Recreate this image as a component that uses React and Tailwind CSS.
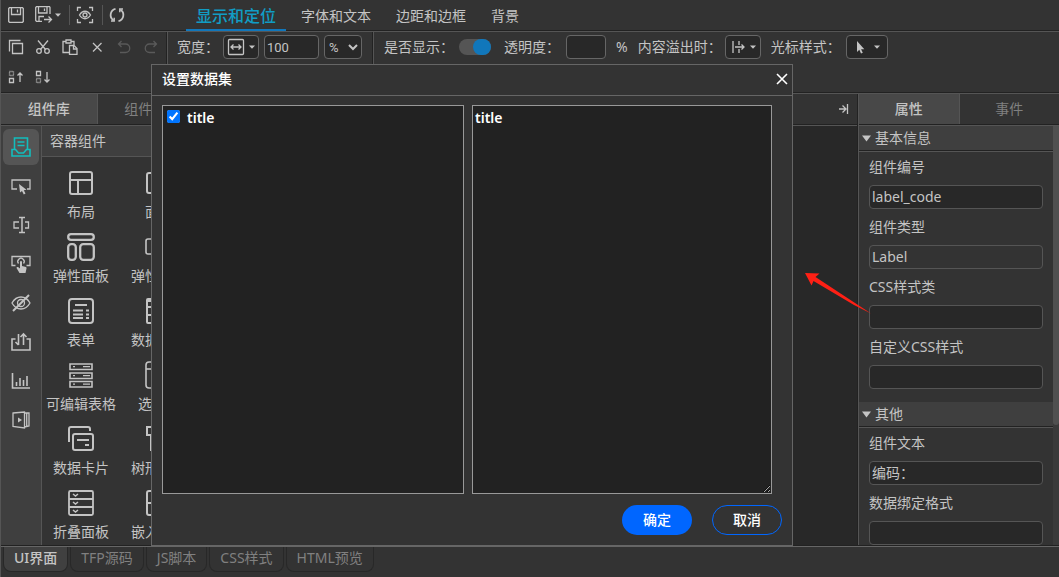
import { useState } from 'react';
import clsx from 'clsx';

const Icon = ({ size = 18, children, ...props }) => (
  <svg
    width={size}
    height={size}
    viewBox={`0 0 ${size} ${size}`}
    fill="none"
    stroke="currentColor"
    strokeWidth="1.3"
    aria-hidden="true"
    className="shrink-0"
    {...props}
  >
    {children}
  </svg>
);

const Caret = () => (
  <svg width="6" height="4" viewBox="0 0 6 4" fill="currentColor" aria-hidden="true">
    <path d="M0 0.5h6L3 3.7z" />
  </svg>
);

const SaveIcon = () => (
  <Icon size={16}>
    <path d="M1.5 .7h13l.8.8v13l-.8.8h-13l-.8-.8v-13z" />
    <path d="M3.5 1v6.5h9V1M9.5 2.5v3" />
  </Icon>
);

const SaveAsIcon = () => (
  <Icon size={18}>
    <path d="M7 15.3H1.5l-.8-.8v-13l.8-.8h13l.5.8V8" />
    <path d="M3.5 1v6H12V1M9.5 2.5V5M4 15v-4.500h5M9 13.500h7.500M13.500 10.500l3 3-3 3" />
  </Icon>
);

const PreviewIcon = () => (
  <Icon size={18}>
    <path d="M1.500 5V1.500H5M13 1.500h3.500V5M16.500 13v3.500H13M5 16.500H1.500V13" />
    <path d="M3.500 9c3-5 8-5 11 0-3 5-8 5-11 0z" />
    <circle cx="9" cy="9" r="2" />
  </Icon>
);

const RefreshIcon = () => (
  <Icon size={18} strokeWidth="1.8">
    <path d="M7.500 2.800A6.300 6.300 0 0 0 5.500 14.200M10.500 15.200A6.300 6.300 0 0 0 12.500 3.800" />
    <path d="M3 15h3.200v-3.300M15 3h-3.200v3.300" strokeWidth="1.500" />
  </Icon>
);

const CopyIcon = () => (
  <Icon size={16}>
    <path d="M4.500 4.500h10v10h-10z" />
    <path d="M1.500 12.500v-11h11" />
  </Icon>
);

const CutIcon = () => (
  <Icon size={16}>
    <circle cx="4" cy="12" r="2.300" />
    <circle cx="12" cy="12" r="2.300" />
    <path d="M3 1.500l7.500 9M13 1.500l-7.500 9" />
  </Icon>
);

const PasteIcon = () => (
  <Icon size={16}>
    <path d="M7 13.500H1V2.500h3M9 2.500h3V6M4 1h5v3H4zM7.500 6.500h4.500l3 3v6H7.500z" />
    <path d="M11.500 6.500v3.500H15" />
  </Icon>
);

const DeleteIcon = () => (
  <Icon size={16}>
    <path d="M4 4l8.500 8.500M12.500 4L4 12.500" />
  </Icon>
);

const UndoIcon = () => (
  <Icon size={16}>
    <path d="M5.500 2L2.500 5l3 3M2.500 5h7a4 4 0 0 1 0 8.500H4" />
  </Icon>
);

const RedoIcon = () => (
  <Icon size={16}>
    <path d="M10.500 2l3 3-3 3M13.500 5h-7a4 4 0 0 0 0 8.500H12" />
  </Icon>
);

const MoveUpIcon = () => (
  <Icon size={16}>
    <path d="M1.500 2.500h4v4h-4z" strokeDasharray="1 1" />
    <path d="M1.500 9.500h4v4h-4zM12 13V4M9.500 6.500L12 4l2.500 2.500" />
  </Icon>
);

const MoveDownIcon = () => (
  <Icon size={16}>
    <path d="M1.500 2.500h4v4h-4z" />
    <path d="M1.500 9.500h4v4h-4z" strokeDasharray="1 1" />
    <path d="M12 3v10M9.500 10.500L12 13l2.500-2.500" />
  </Icon>
);

const HEADER_TABS = ['显示和定位', '字体和文本', '边距和边框', '背景'];

const EDIT_TOOLS = [
  { name: '复制', icon: <CopyIcon /> },
  { name: '剪切', icon: <CutIcon /> },
  { name: '粘贴', icon: <PasteIcon /> },
  { name: '删除', icon: <DeleteIcon /> },
  { name: '撤销', icon: <UndoIcon />, disabled: true },
  { name: '重做', icon: <RedoIcon />, disabled: true },
  { name: '上移', icon: <MoveUpIcon /> },
  { name: '下移', icon: <MoveDownIcon /> }
];

const CATEGORIES = [
  {
    name: '容器组件',
    icon: (
      <Icon size={20} strokeWidth="1.600">
        <path d="M3.500 12V1h13v11M1 19v-6.500h3.500L7.500 16h5l3-3.500H19V19zM6.500 5h7M6.500 8.500h7" />
      </Icon>
    )
  },
  {
    name: '按钮组件',
    icon: (
      <Icon size={20}>
        <path d="M6 13H1V4h18v9h-3" />
        <path d="M8 8l1 8.500 2-1.500 1.800 3.500 1.700-1-1.700-3.200 2.700-.5z" fill="currentColor" stroke="none" />
      </Icon>
    )
  },
  {
    name: '输入组件',
    icon: (
      <Icon size={20}>
        <path d="M8 7H3v6h5M14 7h3.500v6H14" />
        <path d="M8 2.500h6M11 2.500v15M8 17.500h6" strokeWidth="1.500" />
      </Icon>
    )
  },
  {
    name: '交互组件',
    icon: (
      <Icon size={20}>
        <path d="M4.500 11.500H1V2.500h18v9h-3.500M7.500 9.500a3.200 3.200 0 1 1 5 0" />
        <path d="M9 7.500q1-1 2 0V12l4 1q.8.500.5 1.500L14.500 19H8.500L5.500 14q0-1.500 1.500-1l2 1.500z" fill="currentColor" stroke="none" />
      </Icon>
    )
  },
  {
    name: '隐藏组件',
    icon: (
      <Icon size={20}>
        <path d="M1 10c4.500-8 13.500-8 18 0-4.500 8-13.500 8-18 0z" />
        <circle cx="10" cy="10" r="3.500" />
        <path d="M2 18L18 2" strokeWidth="2" />
      </Icon>
    )
  },
  {
    name: '数据组件',
    icon: (
      <Icon size={20} strokeWidth="1.600">
        <path d="M4.500 7H1v11h18V7h-3.500M7.500 2v11M4.500 10l3 3M12.500 13V2M9.500 5l3-3 3 3" />
      </Icon>
    )
  },
  {
    name: '图表组件',
    icon: (
      <Icon size={20} strokeWidth="1.600">
        <path d="M1.500 2v15H19M5.500 11v4M9 7v8M12.500 9v6M16 5v10" />
      </Icon>
    )
  },
  {
    name: '媒体组件',
    icon: (
      <Icon size={20}>
        <path d="M2 3l11.500-1v16L2 16.500zM13.500 3H18v13l-4.500 1M15.700 3v13.500" />
        <path d="M7 7.500v5l4-2.500z" fill="currentColor" stroke="none" />
      </Icon>
    )
  }
];

const COMPONENTS = [
  {
    name: '布局',
    icon: (
      <Icon size={28} strokeWidth="2">
        <rect x="3" y="3" width="22" height="22" rx="2" />
        <path d="M3 11h22M11 11v14" />
      </Icon>
    )
  },
  {
    name: '面板',
    icon: (
      <Icon size={28} strokeWidth="2">
        <rect x="2" y="4" width="24" height="20" rx="2" />
      </Icon>
    )
  },
  {
    name: '弹性面板',
    icon: (
      <Icon size={28} strokeWidth="2.300">
        <rect x="1.200" y="1.200" width="25.600" height="5.600" rx="2.800" />
        <rect x="1.200" y="11.200" width="7.600" height="15.600" rx="3" />
        <rect x="13.200" y="11.200" width="13.600" height="15.600" rx="3" />
      </Icon>
    )
  },
  {
    name: '弹性布局',
    icon: (
      <Icon size={28} strokeWidth="1.600">
        <rect x="1" y="6" width="26" height="15" rx="2" />
      </Icon>
    )
  },
  {
    name: '表单',
    icon: (
      <Icon size={28} strokeWidth="2">
        <rect x="2" y="2" width="24" height="24" rx="3" />
        <path d="M8 8h12M6 13.500h10M6 17.500h10M6 21h10M19 13.500h3M19 17.500h3M19 21h3" />
      </Icon>
    )
  },
  {
    name: '数据表格',
    icon: (
      <Icon size={28} strokeWidth="2">
        <rect x="2" y="2" width="24" height="24" rx="1" />
        <path d="M2 4h24M2 10h24M2 18h24" />
      </Icon>
    )
  },
  {
    name: '可编辑表格',
    icon: (
      <Icon size={28} strokeWidth="1.600">
        <path d="M3 3h22v5.500H3zM3 12h22v5.500H3zM3 20.500h22V26H3z" />
        <path d="M6 5.700h2M16 5.700h7M6 14.700h2M16 14.700h7M6 23.200h2M16 23.200h7" strokeWidth="1.300" />
      </Icon>
    )
  },
  {
    name: '选项卡',
    icon: (
      <Icon size={28} strokeWidth="1.600">
        <rect x="1" y="1" width="26" height="26" rx="3" />
        <path d="M1 8h26" />
      </Icon>
    )
  },
  {
    name: '数据卡片',
    icon: (
      <Icon size={28} strokeWidth="2">
        <path d="M2 17V4q0-2 2-2h17q2 0 2 2v2" />
        <rect x="6" y="9" width="20" height="16" rx="2" />
        <path d="M10 15h12M18 20h4" />
      </Icon>
    )
  },
  {
    name: '树形组件',
    icon: (
      <Icon size={28} strokeWidth="2">
        <path d="M2 2h8v8H2zM6 10v15h12M6 14h12M18 10h8v8h-8z" />
      </Icon>
    )
  },
  {
    name: '折叠面板',
    icon: (
      <Icon size={28} strokeWidth="1.800">
        <rect x="2" y="2" width="24" height="24" rx="1.500" />
        <path d="M2 10h24M2 18h24" />
        <path d="M6 5l2.500 2L11 5M6 13l2.500 2 2.500-2M6 21l2.500 2 2.500-2" strokeWidth="1.500" />
      </Icon>
    )
  },
  {
    name: '嵌入页面',
    icon: (
      <Icon size={28} strokeWidth="2">
        <rect x="2" y="2" width="24" height="24" rx="2" />
        <path d="M2 14h24" />
      </Icon>
    )
  }
];

const SECTIONS = [
  {
    title: '基本信息',
    fields: [
      { id: 'code', label: '组件编号', value: 'label_code' },
      { id: 'type', label: '组件类型', value: 'Label', readOnly: true },
      { id: 'cssClass', label: 'CSS样式类', value: '' },
      { id: 'cssStyle', label: '自定义CSS样式', value: '' }
    ]
  },
  {
    title: '其他',
    fields: [
      { id: 'text', label: '组件文本', value: '编码：' },
      { id: 'format', label: '数据绑定格式', value: '' }
    ]
  }
];

const EDITOR_TABS = ['UI界面', 'TFP源码', 'JS脚本', 'CSS样式', 'HTML预览'];

const Header = () => {
  const [active, setActive] = useState(0);

  return (
    <header className="flex h-[31px] shrink-0 items-center border-b border-[#222]">
      <div className="flex w-[185px] items-center pl-[7px]">
        <button type="button" aria-label="保存"><SaveIcon /></button>
        <button type="button" aria-label="另存为" className="ml-[11px] flex items-center gap-[2px]">
          <SaveAsIcon />
          <Caret />
        </button>
        <span className="ml-2 h-5 w-px bg-[#555]" />
        <button type="button" aria-label="预览" className="ml-[6px]"><PreviewIcon /></button>
        <span className="ml-2 h-5 w-px bg-[#555]" />
        <button type="button" aria-label="刷新" className="ml-[5px]"><RefreshIcon /></button>
      </div>
      <nav className="flex h-full gap-[5px]">
        {HEADER_TABS.map((tab, i) => (
          <button
            key={tab}
            type="button"
            onClick={() => setActive(i)}
            className={clsx(
              'h-[31px] px-[10px]',
              i === active
                ? 'border-b-2 border-[#1177bb] pt-[2px] text-base font-medium text-[#119dc4]'
                : 'text-sm'
            )}
          >
            {tab}
          </button>
        ))}
      </nav>
    </header>
  );
};

const Toolbar = () => {
  const [width, setWidth] = useState('100');
  const [opacity, setOpacity] = useState('');
  const [visible, setVisible] = useState(true);

  return (
    <div className="flex h-[62px] shrink-0 border-t border-b border-t-[#555] border-b-[#222]">
      <div className="flex w-[166px] flex-wrap content-start border-r border-[#222] pl-px">
        {EDIT_TOOLS.map(({ name, icon, disabled }) => (
          <button
            key={name}
            type="button"
            aria-label={name}
            disabled={disabled}
            className="flex h-[30px] w-[27px] items-center justify-center disabled:text-[#5a5a5a]"
          >
            {icon}
          </button>
        ))}
      </div>
      <div className="flex w-[206px] items-start gap-[5px] border-r border-l border-r-[#222] border-l-[#555] pt-[3px] pl-[9px]">
        <label htmlFor="width" className="w-[41px] shrink-0 leading-6 whitespace-nowrap">宽度：</label>
        <button
          type="button"
          aria-label="宽度模式"
          className="flex h-6 w-9 shrink-0 items-center justify-center gap-1 rounded border border-[#666] bg-[#282828]"
        >
          <Icon size={18}>
            <rect x="1.500" y="1.500" width="15" height="15" rx="1" />
            <path d="M4.500 9h9M6.500 6.500L4 9l2.500 2.500M11.500 6.500L14 9l-2.500 2.500" />
          </Icon>
          <Caret />
        </button>
        <input
          id="width"
          value={width}
          onChange={(e) => setWidth(e.target.value)}
          className="h-6 w-[55px] shrink-0 rounded border border-[#666] bg-[#282828] px-[2px] font-[Roboto,'Noto_Sans_CJK_SC',sans-serif] text-[13px]"
        />
        <select
          aria-label="宽度单位"
          className="h-6 w-[38px] shrink-0 rounded border border-[#666] bg-[#282828] font-[Roboto,'Noto_Sans_CJK_SC',sans-serif] text-[13px]"
        >
          <option>%</option>
          <option>px</option>
        </select>
      </div>
      <div className="flex min-w-0 grow items-start border-l border-[#555] pt-[3px] pl-[10px] leading-6 whitespace-nowrap">
        <label htmlFor="visible">是否显示：</label>
        <input
          id="visible"
          type="checkbox"
          checked={visible}
          onChange={(e) => setVisible(e.target.checked)}
          className="mt-1 ml-[5px] flex h-4 w-8 shrink-0 appearance-none rounded-full bg-[#555] before:h-4 before:w-[18px] before:rounded-full before:bg-[#999] checked:justify-end checked:before:bg-[#1177bb]"
        />
        <label htmlFor="opacity" className="ml-[13px]">透明度：</label>
        <input
          id="opacity"
          value={opacity}
          onChange={(e) => setOpacity(e.target.value)}
          className="ml-[6px] h-6 w-10 rounded border border-[#666] bg-[#282828] px-[2px]"
        />
        <span className="ml-[10px]">%</span>
        <span className="ml-[10px]">内容溢出时：</span>
        <button
          type="button"
          aria-label="内容溢出时"
          className="ml-[3px] flex h-6 w-9 items-center justify-center gap-1 rounded border border-[#666] bg-[#282828]"
        >
          <Icon size={16}>
            <path d="M3 2v12M5 8h9M11.500 5.500L14 8l-2.500 2.500M9 2v4M9 10v4" />
          </Icon>
          <Caret />
        </button>
        <span className="ml-[10px]">光标样式：</span>
        <button
          type="button"
          aria-label="光标样式"
          className="ml-[5px] flex h-6 w-[42px] items-center justify-center gap-2 rounded border border-[#666] bg-[#282828]"
        >
          <svg width="12" height="14" viewBox="0 0 12 14" fill="currentColor" aria-hidden="true">
            <path d="M3 1v11l2.300-2.200 1.700 3.700 1.800-.8-1.700-3.500h3.200z" />
          </svg>
          <Caret />
        </button>
      </div>
    </div>
  );
};

const PanelTabs = ({ tabs }) => {
  const [active, setActive] = useState(0);

  return (
    <div className="flex h-[31px] shrink-0 border-b border-[#222]">
      {tabs.map((tab, i) => (
        <button
          key={tab}
          type="button"
          onClick={() => setActive(i)}
          className={clsx(
            'flex-1',
            i > 0 && 'border-l border-[#555]',
            i === active ? 'bg-[#484848] font-medium' : 'text-[#808080]'
          )}
        >
          {tab}
        </button>
      ))}
    </div>
  );
};

const LibraryPanel = () => {
  const [category, setCategory] = useState('容器组件');

  return (
    <aside className="flex w-[193px] shrink-0 flex-col border-r border-[#555]">
      <PanelTabs tabs={['组件库', '组件树']} />
      <div className="flex min-h-0 grow border-t border-[#555]">
        <div className="flex w-[41px] shrink-0 flex-col gap-[3px] border-r border-[#555] bg-[#3f3f3f] pt-[3px] pl-[2px]">
          {CATEGORIES.map(({ name, icon }) => (
            <button
              key={name}
              type="button"
              aria-label={name}
              onClick={() => setCategory(name)}
              className={clsx(
                'flex h-9 w-9 shrink-0 items-center justify-center rounded-md',
                name === category && 'bg-[#555] text-[#12bdbd]'
              )}
            >
              {icon}
            </button>
          ))}
        </div>
        <div className="min-w-0 grow overflow-hidden">
          <h2 className="h-[31px] border-b border-[#555] bg-[#3f3f3f] pl-2 leading-[30px]">{category}</h2>
          <div className="grid grid-cols-[78px_78px] pt-[9px]">
            {COMPONENTS.map(({ name, icon }) => (
              <button key={name} type="button" className="flex h-16 flex-col items-center gap-[5px] pt-[3px] whitespace-nowrap">
                {icon}
                <span className="leading-5">{name}</span>
              </button>
            ))}
          </div>
        </div>
      </div>
    </aside>
  );
};

const PropertyPanel = () => {
  const [values, setValues] = useState(
    Object.fromEntries(SECTIONS.flatMap((s) => s.fields.map((f) => [f.id, f.value])))
  );

  const handleChange = (e) => {
    setValues({ ...values, [e.target.name]: e.target.value });
  };

  return (
    <aside className="flex w-[201px] shrink-0 flex-col border-l border-[#555]">
      <PanelTabs tabs={['属性', '事件']} />
      <div className="flex min-h-0 grow border-t border-[#555]">
        <div className="min-w-0 grow overflow-hidden">
          {SECTIONS.map(({ title, fields }) => (
            <section key={title}>
              <div className="border-b border-[#555]">
                <h2 className="flex h-[25px] items-center gap-1 border-b border-[#222] bg-[#3f3f3f] pl-[3px]">
                  <svg width="9" height="7" viewBox="0 0 9 7" fill="currentColor" aria-hidden="true">
                    <path d="M0 0.500h9L4.500 6.500z" />
                  </svg>
                  {title}
                </h2>
              </div>
              <div className="px-[10px] py-[5px]">
                {fields.map(({ id, label, readOnly }) => (
                  <div key={id} className="mb-2">
                    <label htmlFor={id} className="mb-2 block leading-5">{label}</label>
                    <input
                      id={id}
                      name={id}
                      value={values[id]}
                      readOnly={readOnly}
                      onChange={handleChange}
                      className="block h-6 w-full rounded border border-[#555] bg-[#282828] px-[2px] pb-[2px] read-only:bg-transparent"
                    />
                  </div>
                ))}
              </div>
            </section>
          ))}
        </div>
        <div className="w-[6px] shrink-0 bg-[#3a3a3a]">
          <div className="h-[299px] rounded-b-sm bg-[#505050]" />
        </div>
      </div>
    </aside>
  );
};

const DatasetDialog = () => {
  const [checked, setChecked] = useState(true);
  const [fields, setFields] = useState('title');

  return (
    <div
      role="dialog"
      aria-label="设置数据集"
      className="absolute top-16 left-[150px] flex w-[642px] flex-col border border-[#666] bg-[#333] text-white"
    >
      <div className="flex h-[31px] items-center justify-between border-b border-[#666] pr-1 pb-[2px] pl-[10px]">
        <h2 className="font-medium">设置数据集</h2>
        <button type="button" aria-label="关闭">
          <Icon size={12} strokeWidth="1.600">
            <path d="M1 1l10 10M11 1L1 11" />
          </Icon>
        </button>
      </div>
      <div className="flex h-[398px] gap-2 pt-[9px] pr-5 pl-[10px]">
        <div className="flex-1 border border-[#999] bg-[#222]">
          <label className="flex items-start gap-[7px] pt-[2px] pl-1 leading-5 font-semibold">
            <input
              type="checkbox"
              checked={checked}
              onChange={(e) => setChecked(e.target.checked)}
              className="mt-[2px] h-[13px] w-[13px] accent-[#0075ff]"
            />
            title
          </label>
        </div>
        <textarea
          aria-label="数据集字段"
          value={fields}
          onChange={(e) => setFields(e.target.value)}
          className="w-[300px] border border-[#999] bg-[#222] px-[2px] pt-[2px] leading-5 font-semibold"
        />
      </div>
      <div className="flex h-[51px] justify-end gap-5 pt-[11px] pr-[10px]">
        <button type="button" className="h-[30px] w-[70px] rounded-full bg-[#0066ff] font-medium">确定</button>
        <button type="button" className="h-[30px] w-[70px] rounded-full border border-[#0066ff] font-medium">取消</button>
      </div>
    </div>
  );
};

const Footer = () => {
  const [active, setActive] = useState(0);

  return (
    <footer className="flex h-[31px] shrink-0 items-start gap-[2px] border-t border-[#666] pl-[2px]">
      {EDITOR_TABS.map((tab, i) => (
        <button
          key={tab}
          type="button"
          onClick={() => setActive(i)}
          className={clsx(
            'h-[25px] rounded-b-lg border border-t-0 border-[#282828] px-[10px] pb-[2px]',
            i === active ? 'bg-[#404040] font-medium' : 'text-[#808080]'
          )}
        >
          {tab}
        </button>
      ))}
    </footer>
  );
};

const App = () => {
  return (
    <div className="relative flex h-screen flex-col overflow-hidden border-l border-[#555] bg-[#333] font-['Noto_Sans','Noto_Sans_CJK_SC',sans-serif] text-sm text-[#c4c4c4]">
      <Header />
      <Toolbar />
      <main className="flex min-h-0 grow border-t border-b border-t-[#555] border-b-[#222]">
        <LibraryPanel />
        <div className="flex min-w-0 grow flex-col border-r border-[#222]">
          <div className="flex h-[31px] shrink-0 items-center justify-end border-b border-[#222] pr-2">
            <button type="button" aria-label="收起面板">
              <Icon size={10}>
                <path d="M0 5h6M3.500 1.500L7 5 3.500 8.500M8.500 0v10" />
              </Icon>
            </button>
          </div>
          <div className="grow border-t border-[#555] bg-[#282828]" />
        </div>
        <PropertyPanel />
      </main>
      <Footer />
      <DatasetDialog />
      <svg
        width="68"
        height="42"
        viewBox="0 0 68 42"
        fill="#ff2015"
        aria-hidden="true"
        className="pointer-events-none absolute top-[272px] left-[803px]"
      >
        <path d="M1 1l14.500.5-4 3.500L67 41.500 50 33 9.500 9l-2 4.500z" />
      </svg>
    </div>
  );
};

export default App;
